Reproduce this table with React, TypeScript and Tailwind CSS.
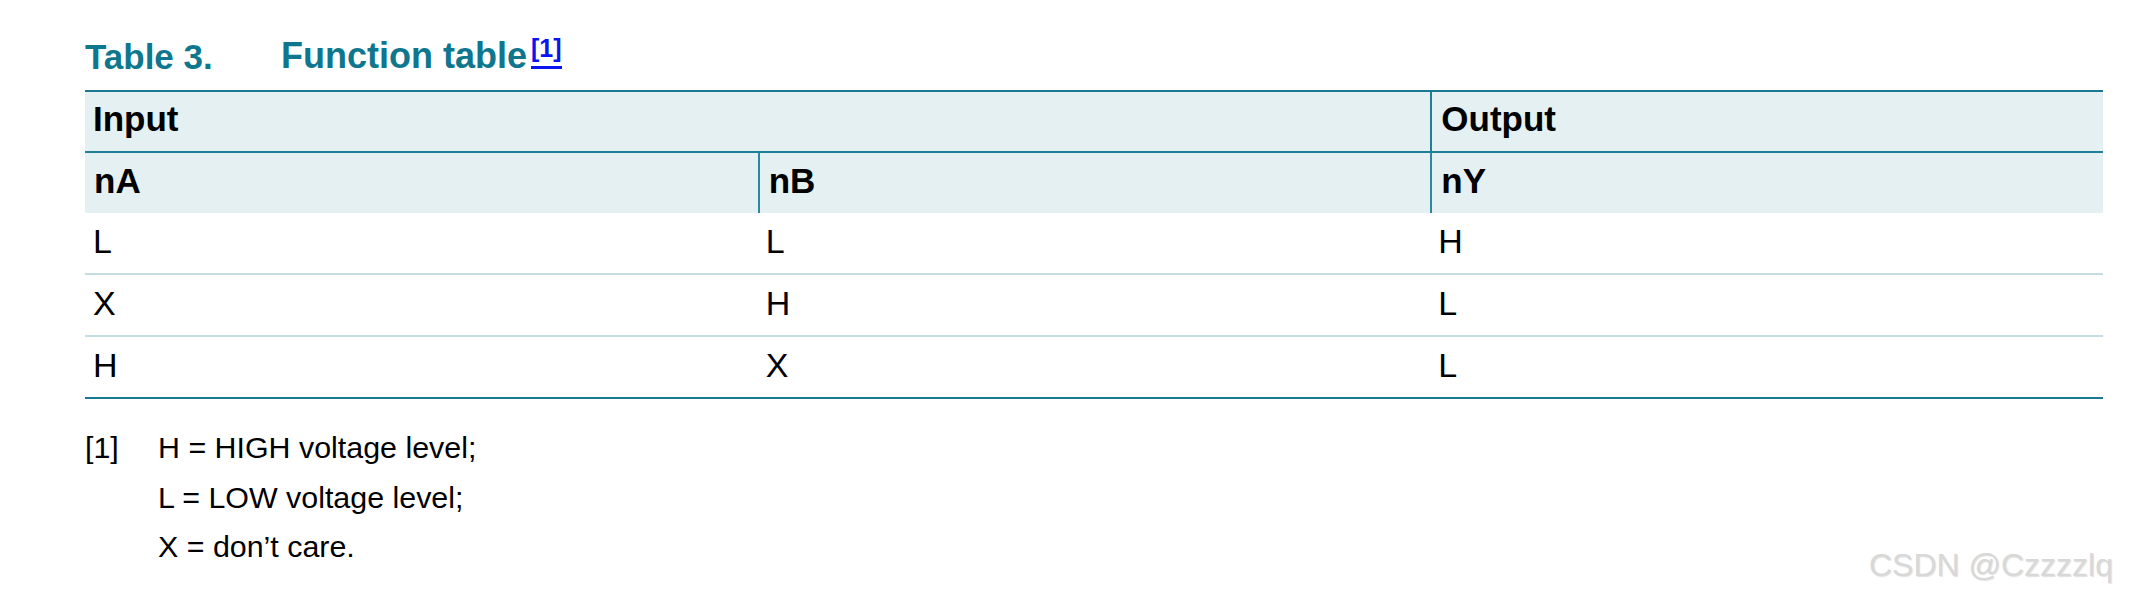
import React from 'react';

const font = { fontFamily: '"Liberation Sans", Arial, sans-serif' };

const rows = [
    ['L', 'L', 'H'],
    ['X', 'H', 'L'],
    ['H', 'X', 'L'],
];

export default function App() {
    return (
        <div className="relative w-[2152px] h-[604px] bg-white text-black overflow-hidden" style={font}>
            <div className="pl-[85px] pr-[49px] pt-[37px]">
                {/* caption */}
                <div className="flex items-start h-[53px] leading-none font-bold text-[#0f778d]">
                    <span className="w-[196px] shrink-0 mt-[2px] text-[35px]">Table 3.</span>
                    <span className="mt-[1px] text-[36px]">Function table</span>
                    <span className="text-[25px] leading-none text-[#0a14f0] border-b-[3px] border-[#0a14f0] pb-[5px] -mt-[1px] ml-[4px]">[1]</span>
                </div>

                {/* table */}
                <div className="border-t-2 border-b-2 border-[#1a7890]">
                    <div className="grid grid-cols-3 bg-[#e4f0f1] text-[35px] font-bold leading-none">
                        <div className="col-span-2 h-[61px] flex items-center pl-[8px] pb-[7px] border-b-2 border-[#1f7f96]">Input</div>
                        <div className="h-[61px] flex items-center pl-[9px] pb-[7px] border-b-2 border-l-2 border-[#1f7f96]">Output</div>
                        <div className="h-[60px] flex items-center pl-[9px] pb-[6px]">nA</div>
                        <div className="h-[60px] flex items-center pl-[9px] pb-[6px] border-l-2 border-[#2a88a0]">nB</div>
                        <div className="h-[60px] flex items-center pl-[9px] pb-[6px] border-l-2 border-[#2a88a0]">nY</div>
                    </div>
                    {rows.map((r, i) => (
                        <div
                            key={i}
                            className={`grid grid-cols-3 text-[34px] leading-none ${i < rows.length - 1 ? 'h-[62px] border-b-2 border-[#c3dde2]' : 'h-[60px]'}`}
                        >
                            {r.map((v, j) => (
                                <div key={j} className="flex items-center pl-[8px] pb-[5px]">{v}</div>
                            ))}
                        </div>
                    ))}
                </div>

                {/* footnote */}
                <div className="flex mt-[24px] text-[30.4px] leading-[49.5px]">
                    <span className="w-[73px] shrink-0">[1]</span>
                    <div className="flex flex-col">
                        <span>H = HIGH voltage level;</span>
                        <span>L = LOW voltage level;</span>
                        <span>X = don’t care.</span>
                    </div>
                </div>
            </div>

            <div className="absolute right-[39px] top-[549px] text-[32px] leading-none text-[#d8d8d8] [text-shadow:1px_1px_1px_rgba(0,0,0,0.12)]">
                CSDN @Czzzzlq
            </div>
        </div>
    );
}
